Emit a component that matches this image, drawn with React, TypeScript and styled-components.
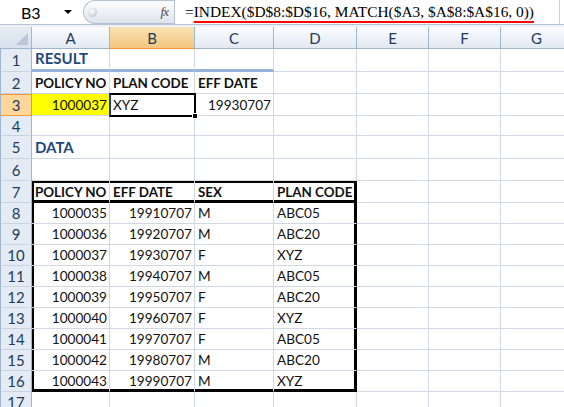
import React from 'react';
import styled, { createGlobalStyle, css } from 'styled-components';

const GlobalStyle = createGlobalStyle`
  html, body { margin: 0; padding: 0; background: #ffffff; }
  body { width: 564px; height: 407px; overflow: hidden; font-family: Lato, "Open Sans", sans-serif; }
  * { box-sizing: border-box; }
`;

const Window = styled.div`
  width: 564px;
  height: 407px;
  overflow: hidden;
  display: flex;
  flex-direction: column;
  background: #ffffff;
`;

const FormulaBar = styled.div`
  display: flex;
  height: 25px;
  border-bottom: 1px solid #b7c4d5;
  background: #ffffff;
  flex: none;
`;

const NameBox = styled.div`
  width: 83px;
  display: flex;
  align-items: center;
  padding-left: 21px;
  font: 16px Lato, sans-serif;
  color: #000;
`;

const NameText = styled.span`
  flex: 1;
`;

const DropArrow = styled.span`
  width: 0;
  height: 0;
  border-left: 4px solid transparent;
  border-right: 4px solid transparent;
  border-top: 4px solid #000;
  margin-right: 11px;
`;

const FxPill = styled.div`
  width: 91px;
  display: flex;
  align-items: center;
  justify-content: space-between;
  padding: 0 6px 0 4px;
  border-radius: 12px 0 0 12px;
  border: 1px solid #b3c0d0;
  border-right: none;
  background: linear-gradient(#fbfcfd, #dfe5ed);
`;

const Dot = styled.span`
  width: 9px;
  height: 9px;
  border-radius: 50%;
  background: radial-gradient(circle at 40% 35%, #ffffff, #b3bac4);
`;

const Fx = styled.span`
  font: italic 13px "Liberation Serif", serif;
  color: #4a4a4a;
  letter-spacing: -1px;
`;

const FormulaInput = styled.div`
  flex: 1;
  border-left: 1px solid #b3c0d0;
  padding-left: 10px;
  display: flex;
  align-items: center;
  font: 15.4px "Liberation Serif", serif;
  color: #000;
  white-space: nowrap;
  border-right: 1px solid #c9d3df;
  margin-right: 4px;
`;

const Underlined = styled.span`
  text-decoration: underline 2px #ff0000;
  text-underline-offset: 4px;
`;

const Gap = styled.div`
  height: 2px;
  background: #eef2f7;
  flex: none;
`;

const Sheet = styled.div`
  position: relative;
  display: grid;
  grid-template-columns: 32px 78px 85px 79px 83px 72px 72px 72px;
  grid-template-rows: 22px 23px 22px 22px 20px 23px 22px 22px repeat(9, 21px) 21px;
  width: 573px;
`;

const Corner = styled.div`
  position: relative;
  background: linear-gradient(#e6ecf4, #d8e1ec);
  border-right: 1px solid #9eb6ce;
  border-bottom: 1px solid #9eb6ce;
  &::after {
    content: '';
    position: absolute;
    right: 3px;
    bottom: 3px;
    width: 0;
    height: 0;
    border-left: 12px solid transparent;
    border-bottom: 12px solid #b8c6d8;
  }
`;

const ColHeader = styled.div<{ $selected?: boolean }>`
  display: flex;
  align-items: center;
  justify-content: center;
  font: 15px Lato, sans-serif;
  color: #1e3a5c;
  border-right: 1px solid #9eb6ce;
  border-bottom: 1px solid #9eb6ce;
  background: ${p => (p.$selected ? 'linear-gradient(#fae2b5, #f3c77f)' : 'linear-gradient(#fafbfd, #e3e9f2)')};
  ${p => p.$selected && css`border-bottom-color: #f29536;`}
`;

const RowHeader = styled.div<{ $selected?: boolean }>`
  display: flex;
  align-items: center;
  justify-content: center;
  font: 15px Lato, sans-serif;
  color: #1e3a5c;
  border-left: 1px solid #9eb6ce;
  border-right: 1px solid #9eb6ce;
  border-bottom: 1px solid #c5d2e2;
  background: ${p => (p.$selected ? '#fcd69b' : '#e4ebf5')};
  ${p => p.$selected && css`border-right-color: #f29536; border-bottom-color: #f29536; border-top: 1px solid #f29536;`}
`;

type CellProps = {
  $align?: 'left' | 'right';
  $bold?: boolean;
  $heading?: boolean;
  $fill?: string;
  $bt?: boolean;
  $bb?: boolean;
  $bl?: boolean;
  $br?: boolean;
  $hline?: boolean;
};

const Cell = styled.div<CellProps>`
  display: flex;
  align-items: flex-end;
  justify-content: ${p => (p.$align === 'right' ? 'flex-end' : 'flex-start')};
  padding: 0 2px 2px 3px;
  font: ${p => (p.$bold || p.$heading ? 'bold' : 'normal')} ${p => (p.$heading ? '15px' : p.$bold ? '13.4px' : '13.6px')} Lato, sans-serif;
  color: ${p => (p.$heading ? '#1f497d' : '#111111')};
  background: ${p => p.$fill ?? 'transparent'};
  white-space: nowrap;
  overflow: visible;
  border-right: 1px solid ${p => (p.$br ? '#000' : '#d0d7e5')};
  border-bottom: ${p => (p.$hline ? '3px solid #95b3d7' : `1px solid ${p.$bb ? '#000' : '#d0d7e5'}`)};
  box-shadow: ${p => {
    const s: string[] = [];
    if (p.$bt) s.push('inset 0 2px 0 #000');
    if (p.$bl) s.push('inset 2px 0 0 #000');
    if (p.$br) s.push('inset -2px 0 0 #000');
    if (p.$bb) s.push('inset 0 -2px 0 #000');
    return s.length ? s.join(', ') : 'none';
  }};
`;

const Selection = styled.div`
  position: absolute;
  left: 109px;
  top: 66px;
  width: 87px;
  height: 24px;
  border: 2px solid #000;
  border-left-color: #1b2fd6;
  pointer-events: none;
`;

const FillHandle = styled.div`
  position: absolute;
  right: -4px;
  bottom: -4px;
  width: 6px;
  height: 6px;
  background: #000;
  border: 1px solid #fff;
`;

type CellSpec = { t?: string; align?: 'left' | 'right'; bold?: boolean; heading?: boolean; fill?: string; hline?: boolean };

const N = (t: string): CellSpec => ({ t, align: 'right' });
const B = (t: string): CellSpec => ({ t, bold: true });
const T = (t: string): CellSpec => ({ t });

const data: [string, string, string, string][] = [
  ['1000035', '19910707', 'M', 'ABC05'],
  ['1000036', '19920707', 'M', 'ABC20'],
  ['1000037', '19930707', 'F', 'XYZ'],
  ['1000038', '19940707', 'M', 'ABC05'],
  ['1000039', '19950707', 'F', 'ABC20'],
  ['1000040', '19960707', 'F', 'XYZ'],
  ['1000041', '19970707', 'F', 'ABC05'],
  ['1000042', '19980707', 'M', 'ABC20'],
  ['1000043', '19990707', 'M', 'XYZ'],
];

const rows: CellSpec[][] = [
  [{ t: 'RESULT', heading: true, hline: true }, { hline: true }, { hline: true }],
  [B('POLICY NO'), B('PLAN CODE'), B('EFF DATE')],
  [{ t: '1000037', align: 'right', fill: '#ffff00' }, T('XYZ'), N('19930707')],
  [],
  [{ t: 'DATA', heading: true }],
  [],
  [B('POLICY NO'), B('EFF DATE'), B('SEX'), B('PLAN CODE')],
  ...data.map(r => [N(r[0]), N(r[1]), T(r[2]), T(r[3])]),
  [],
];

const COLS = ['A', 'B', 'C', 'D', 'E', 'F', 'G'];

export default function App() {
  return (
    <Window>
      <GlobalStyle />
      <FormulaBar>
        <NameBox>
          <NameText>B3</NameText>
          <DropArrow />
        </NameBox>
        <FxPill>
          <Dot />
          <Fx>fx</Fx>
        </FxPill>
        <FormulaInput>
          =<Underlined>INDEX($D$8:$D$16, MATCH($A3, $A$8:$A$16, 0))</Underlined>
        </FormulaInput>
      </FormulaBar>
      <Gap />
      <Sheet>
        <Corner />
        {COLS.map(c => (
          <ColHeader key={c} $selected={c === 'B'}>
            {c}
          </ColHeader>
        ))}
        {rows.map((row, ri) => {
          const rowNum = ri + 1;
          const inTable = rowNum >= 7 && rowNum <= 16;
          return (
            <React.Fragment key={ri}>
              <RowHeader $selected={rowNum === 3}>{rowNum}</RowHeader>
              {COLS.map((c, ci) => {
                const spec = row[ci] ?? {};
                const tableCol = inTable && ci <= 3;
                return (
                  <Cell
                    key={c}
                    $align={spec.align}
                    $bold={spec.bold}
                    $heading={spec.heading}
                    $fill={spec.fill}
                    $hline={spec.hline}
                    $bt={tableCol && rowNum === 7}
                    $bb={tableCol && (rowNum === 7 || rowNum === 16)}
                    $bl={tableCol && ci === 0}
                    $br={tableCol && ci === 3}
                  >
                    {spec.t}
                  </Cell>
                );
              })}
            </React.Fragment>
          );
        })}
        <Selection>
          <FillHandle />
        </Selection>
      </Sheet>
    </Window>
  );
}
